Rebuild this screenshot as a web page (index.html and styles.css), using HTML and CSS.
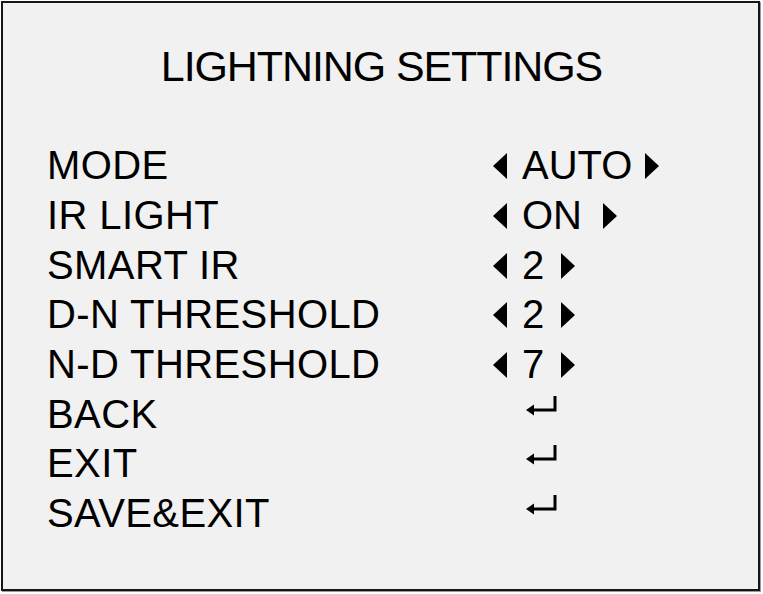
FILE: index.html
```html
<!DOCTYPE html>
<html>
<head>
<meta charset="utf-8">
<link rel="stylesheet" href="styles.css">
</head>
<body>
<div class="frame">
  <h1 class="title">LIGHTNING SETTINGS</h1>
  <div class="menu">
    <div class="label">MODE</div>
    <div class="value"><span class="tri tri-l"></span><span class="txt">AUTO</span><span class="tri tri-r auto-r"></span></div>

    <div class="label">IR LIGHT</div>
    <div class="value"><span class="tri tri-l"></span><span class="txt">ON</span><span class="tri tri-r on-r"></span></div>

    <div class="label">SMART IR</div>
    <div class="value"><span class="tri tri-l"></span><span class="txt">2</span><span class="tri tri-r num-r"></span></div>

    <div class="label">D-N THRESHOLD</div>
    <div class="value"><span class="tri tri-l"></span><span class="txt">2</span><span class="tri tri-r num-r"></span></div>

    <div class="label">N-D THRESHOLD</div>
    <div class="value"><span class="tri tri-l"></span><span class="txt">7</span><span class="tri tri-r num-r"></span></div>

    <div class="label">BACK</div>
    <div class="value"><svg class="enter" width="31" height="18" viewBox="0 0 31 18"><path d="M29 0 V14 H6" fill="none" stroke="#000" stroke-width="3"/><polygon points="0,14 8,8.5 8,19.5"/></svg></div>

    <div class="label">EXIT</div>
    <div class="value"><svg class="enter" width="31" height="18" viewBox="0 0 31 18"><path d="M29 0 V14 H6" fill="none" stroke="#000" stroke-width="3"/><polygon points="0,14 8,8.5 8,19.5"/></svg></div>

    <div class="label">SAVE&amp;EXIT</div>
    <div class="value"><svg class="enter" width="31" height="18" viewBox="0 0 31 18"><path d="M29 0 V14 H6" fill="none" stroke="#000" stroke-width="3"/><polygon points="0,14 8,8.5 8,19.5"/></svg></div>
  </div>
</div>
</body>
</html>
```

FILE: styles.css
```css
html, body {
  margin: 0;
  padding: 0;
  background: #ffffff;
}

body {
  width: 763px;
  height: 594px;
  font-family: "Liberation Sans", Arial, sans-serif;
  color: #000;
}

.frame {
  box-sizing: border-box;
  margin: 1px 0 0 1px;
  width: 759px;
  height: 590px;
  border: 2px solid #161616;
  background: #f1f1f1;
  padding-top: 38px;
  box-shadow: 1px 1px 0 #9a9a9a;
}

.title {
  margin: 0;
  font-weight: normal;
  font-size: 43px;
  line-height: 50px;
  letter-spacing: -1.1px;
  text-align: center;
  padding-left: 2px;
}

.menu {
  margin-top: 50.4px;
  display: grid;
  grid-template-columns: 445px 1fr;
  grid-auto-rows: 49.67px;
  padding-left: 44px;
  font-size: 40px;
  line-height: 49.67px;
}

.label {
  white-space: nowrap;
  letter-spacing: 0.4px;
}

.value {
  white-space: nowrap;
}

.tri {
  display: inline-block;
  width: 0;
  height: 0;
  border-top: 13px solid transparent;
  border-bottom: 13px solid transparent;
  vertical-align: 0px;
}

.tri-l {
  border-right: 14px solid #000;
  margin-left: 1px;
}

.tri-r {
  border-left: 14px solid #000;
}

.txt {
  margin-left: 15px;
}

.auto-r {
  margin-left: 13px;
}

.on-r {
  margin-left: 21px;
}

.num-r {
  margin-left: 17px;
}

.enter {
  display: inline-block;
  margin-left: 34px;
  vertical-align: 14px;
  overflow: visible;
}
```
